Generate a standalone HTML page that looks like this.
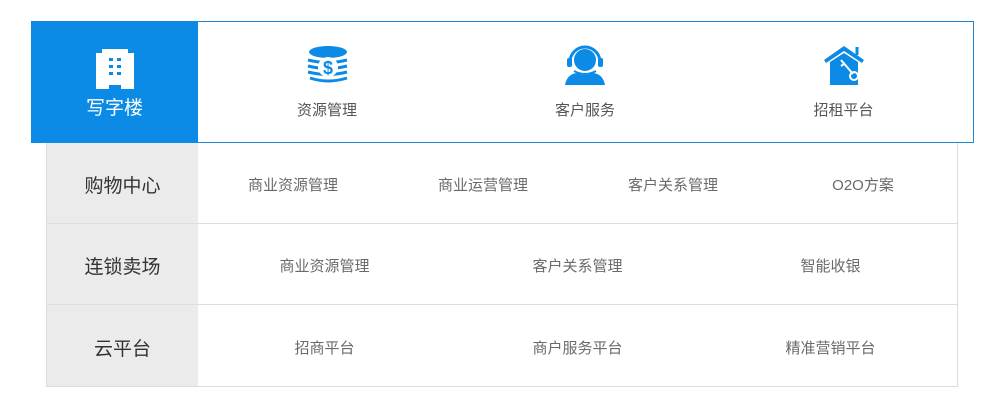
<!DOCTYPE html>
<html><head><meta charset="utf-8"><style>
*{margin:0;padding:0;box-sizing:border-box}
body{width:981px;height:420px;background:#fff;font-family:"Liberation Sans","Noto Sans CJK SC",sans-serif;position:relative;overflow:hidden}
.top{position:absolute;left:31px;top:21px;width:943px;height:122px;border:1px solid #1f86d6;}
.cell{position:absolute;top:0;height:120px;text-align:center}
.cell svg{position:absolute;left:50%;transform:translateX(-50%)}
.cell .lbl{position:absolute;left:0;right:0;top:77px;font-size:15px;color:#555}
.first{left:-1px;top:-1px;width:167px;height:122px;background:#0b8be5}
.first .lbl{color:#fff;font-size:19px;top:72px}
.tbl{position:absolute;left:46px;top:143px;width:912px;height:244px;border:1px solid #ddd;border-top:none}
.row{position:absolute;left:0;width:910px;height:81px;border-bottom:1px solid #ddd}
.row .h{position:absolute;left:0;top:0;width:151px;height:100%;background:#ebebeb;font-size:19px;color:#333;display:flex;align-items:center;justify-content:center;padding-top:3px}
.row .it{position:absolute;top:0;height:100%;display:flex;align-items:center;justify-content:center;font-size:15px;color:#6a6a6a;padding-top:3px}
</style></head><body>
<div class="top">
 <div class="cell first">
  <svg style="top:26px" width="42" height="42" viewBox="0 0 42 42"><path d="M2 6h6V2h26v4h6v36H27v-4h-12v4H2z" fill="#fff"/><g fill="#0b8be5"><rect x="15" y="11" width="4" height="3"/><rect x="23" y="11" width="4" height="3"/><rect x="15" y="18" width="4" height="3"/><rect x="23" y="18" width="4" height="3"/><rect x="15" y="25" width="4" height="3"/><rect x="23" y="25" width="4" height="3"/></g></svg>
  <div class="lbl">写字楼</div>
 </div>
 <div class="cell" style="left:166px;width:258px">
  <svg style="top:23px" width="42" height="40" viewBox="0 0 42 40"><ellipse cx="22" cy="7" rx="19" ry="6" fill="#0b8be5"/><g stroke="#0b8be5" stroke-width="3" fill="none"><path d="M2 15q20 5 39 0"/><path d="M2 21q20 5 39 0"/><path d="M2 27q20 5 39 0"/><path d="M4 33q18 6 37 0"/></g><circle cx="22" cy="22" r="10" fill="#fff"/><text x="22" y="29" font-size="18" font-weight="bold" text-anchor="middle" fill="#0b8be5" font-family="Liberation Sans">$</text></svg>
  <div class="lbl">资源管理</div>
 </div>
 <div class="cell" style="left:424px;width:258px">
  <svg style="top:23px" width="42" height="40" viewBox="0 0 42 40"><circle cx="21" cy="15" r="11" fill="#0b8be5"/><path d="M6 17a15 15 0 0 1 30 0" stroke="#0b8be5" stroke-width="3" fill="none"/><rect x="3" y="13" width="5" height="9" rx="2" fill="#0b8be5"/><rect x="34" y="13" width="5" height="9" rx="2" fill="#0b8be5"/><path d="M10 26q11 6 22 0" stroke="#0b8be5" stroke-width="2" fill="none"/><path d="M1 40q2-11 12-12q8 4 16 0q10 1 12 12z" fill="#0b8be5"/></svg>
  <div class="lbl">客户服务</div>
 </div>
 <div class="cell" style="left:682px;width:259px">
  <svg style="top:22px" width="42" height="42" viewBox="0 0 42 42"><path d="M1 16L21 2l20 14-2 3L21 7 3 19z" fill="#0b8be5"/><path d="M34 3v8" stroke="#0b8be5" stroke-width="3"/><path d="M7 18L21 9l14 9v23H7z" fill="#0b8be5"/><g stroke="#fff" stroke-width="2" fill="none"><path d="M18 16l12 14"/><path d="M21 20l-3 2"/><circle cx="31" cy="32" r="4"/></g></svg>
  <div class="lbl">招租平台</div>
 </div>
</div>
<div class="tbl">
 <div class="row" style="top:0">
  <div class="h">购物中心</div>
  <div class="it" style="left:151px;width:190px">商业资源管理</div>
  <div class="it" style="left:341px;width:190px">商业运营管理</div>
  <div class="it" style="left:531px;width:190px">客户关系管理</div>
  <div class="it" style="left:721px;width:190px">O2O方案</div>
 </div>
 <div class="row" style="top:81px">
  <div class="h">连锁卖场</div>
  <div class="it" style="left:151px;width:253px">商业资源管理</div>
  <div class="it" style="left:404px;width:253px">客户关系管理</div>
  <div class="it" style="left:657px;width:253px">智能收银</div>
 </div>
 <div class="row" style="top:162px;border-bottom:none">
  <div class="h">云平台</div>
  <div class="it" style="left:151px;width:253px">招商平台</div>
  <div class="it" style="left:404px;width:253px">商户服务平台</div>
  <div class="it" style="left:657px;width:253px">精准营销平台</div>
 </div>
</div>
</body></html>
